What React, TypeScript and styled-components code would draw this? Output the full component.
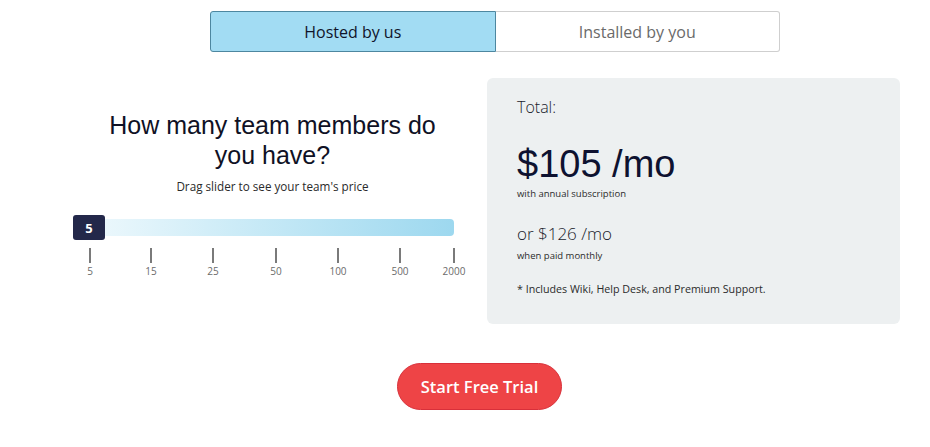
import React from 'react';
import styled, { createGlobalStyle } from 'styled-components';

const GlobalStyle = createGlobalStyle`
  html, body {
    margin: 0;
    padding: 0;
    background: #ffffff;
  }
  body {
    font-family: 'Open Sans', 'Liberation Sans', sans-serif;
    color: #1b1d2e;
  }
`;

const Page = styled.div`
  width: 930px;
  padding-top: 11px;
  display: flex;
  flex-direction: column;
`;

const Toggle = styled.div`
  display: flex;
  margin-left: 210px;
  width: 570px;
  height: 41px;
`;

const ToggleOption = styled.div<{ active?: boolean }>`
  flex: 1;
  display: flex;
  align-items: center;
  justify-content: center;
  font-size: 16px;
  font-weight: ${(p) => (p.active ? 500 : 400)};
  color: ${(p) => (p.active ? '#10142a' : '#6a6a6a')};
  background: ${(p) => (p.active ? '#a2dcf3' : '#ffffff')};
  border: 1px solid ${(p) => (p.active ? '#4d87a0' : '#cfcfcf')};
  border-radius: ${(p) => (p.active ? '3px 0 0 3px' : '0 3px 3px 0')};
  ${(p) => (p.active ? '' : 'border-left: none;')}
`;

const Main = styled.div`
  display: grid;
  grid-template-columns: 425px 413px;
  column-gap: 2px;
  margin-top: 26px;
  margin-left: 60px;
`;

const LeftColumn = styled.div`
  padding-top: 32px;
  display: flex;
  flex-direction: column;
  align-items: center;
`;

const Heading = styled.h2`
  margin: 0;
  max-width: 340px;
  text-align: center;
  font-family: 'Liberation Sans', Arial, sans-serif;
  font-weight: 400;
  font-size: 25px;
  line-height: 30px;
  color: #0f1125;
`;

const Hint = styled.p`
  margin: 8px 0 0;
  font-size: 11.7px;
  line-height: 16px;
  color: #2a2a2a;
`;

const SliderArea = styled.div`
  align-self: flex-start;
  margin-left: 13px;
  margin-top: 21px;
  width: 381px;
`;

const SliderRow = styled.div`
  display: flex;
  align-items: center;
  height: 25px;
`;

const Thumb = styled.div`
  width: 32px;
  height: 25px;
  border-radius: 3px;
  background: #23284a;
  color: #ffffff;
  font-weight: 700;
  font-size: 13px;
  display: flex;
  align-items: center;
  justify-content: center;
  flex-shrink: 0;
  position: relative;
  z-index: 1;
`;

const Track = styled.div`
  flex: 1;
  height: 17px;
  border-radius: 0 4px 4px 0;
  background: linear-gradient(90deg, #eaf7fc 0%, #c6e9f6 45%, #9dd8ef 100%);
`;

const Ticks = styled.div`
  display: flex;
  margin-left: 17px;
  width: 364px;
  margin-top: 8px;
`;

const Tick = styled.div<{ offset: number }>`
  width: 0;
  margin-left: ${(p) => p.offset}px;
  display: flex;
  flex-direction: column;
  align-items: center;
`;

const TickLine = styled.div`
  width: 2px;
  height: 15px;
  background: #7a7a7a;
  flex-shrink: 0;
`;

const TickLabel = styled.span`
  margin-top: 2px;
  font-size: 10px;
  line-height: 12px;
  color: #6b6b6b;
  white-space: nowrap;
`;

const Panel = styled.div`
  height: 246px;
  box-sizing: border-box;
  background: #edf0f1;
  border-radius: 6px;
  padding: 18px 30px 0;
  display: flex;
  flex-direction: column;
  align-items: flex-start;
`;

const TotalLabel = styled.div`
  font-size: 16px;
  font-weight: 300;
  line-height: 22px;
  color: #1a1c2c;
`;

const Price = styled.div`
  margin-top: 24px;
  font-family: 'Liberation Sans', Arial, sans-serif;
  font-size: 38px;
  line-height: 44px;
  color: #0e1230;
`;

const Note = styled.div<{ gap: number }>`
  margin-top: ${(p) => p.gap}px;
  font-size: 9.5px;
  line-height: 12px;
  color: #2b2b2b;
`;

const AltPrice = styled.div`
  margin-top: 22px;
  font-size: 17px;
  font-weight: 300;
  line-height: 24px;
  color: #1a1c2c;
`;

const Includes = styled.div`
  margin-top: 20px;
  font-size: 10.7px;
  line-height: 14px;
  color: #2b2b2b;
`;

const ButtonRow = styled.div`
  display: flex;
  margin-top: 39px;
  margin-left: 397px;
`;

const TrialButton = styled.button`
  width: 165px;
  height: 47px;
  border-radius: 24px;
  border: 1px solid #d8303a;
  background: #ee4446;
  color: #ffffff;
  font-family: 'Open Sans', 'Liberation Sans', sans-serif;
  font-size: 16.5px;
  font-weight: 600;
  cursor: pointer;
`;

// tick label and its distance from the previous tick
const steps: [string, number][] = [
  ['5', 0],
  ['15', 61],
  ['25', 62],
  ['50', 63],
  ['100', 62],
  ['500', 62],
  ['2000', 54],
];

export default function App() {
  return (
    <>
      <GlobalStyle />
      <Page>
        <Toggle>
          <ToggleOption active>Hosted by us</ToggleOption>
          <ToggleOption>Installed by you</ToggleOption>
        </Toggle>
        <Main>
          <LeftColumn>
            <Heading>How many team members do you have?</Heading>
            <Hint>Drag slider to see your team's price</Hint>
            <SliderArea>
              <SliderRow>
                <Thumb>5</Thumb>
                <Track />
              </SliderRow>
              <Ticks>
                {steps.map(([label, offset]) => (
                  <Tick key={label} offset={offset}>
                    <TickLine />
                    <TickLabel>{label}</TickLabel>
                  </Tick>
                ))}
              </Ticks>
            </SliderArea>
          </LeftColumn>
          <Panel>
            <TotalLabel>Total:</TotalLabel>
            <Price>$105 /mo</Price>
            <Note gap={2}>with annual subscription</Note>
            <AltPrice>or $126 /mo</AltPrice>
            <Note gap={4}>when paid monthly</Note>
            <Includes>* Includes Wiki, Help Desk, and Premium Support.</Includes>
          </Panel>
        </Main>
        <ButtonRow>
          <TrialButton>Start Free Trial</TrialButton>
        </ButtonRow>
      </Page>
    </>
  );
}
